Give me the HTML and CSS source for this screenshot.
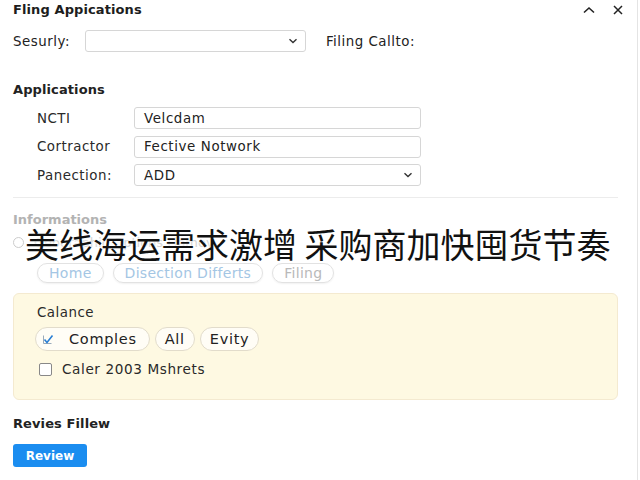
FILE: index.html
```html
<!DOCTYPE html>
<html>
<head>
<meta charset="utf-8">
<link rel="stylesheet" href="styles.css">
</head>
<body>
<div class="panel">
  <div class="header">
    <div class="title">Fling Appications</div>
    <div class="hicons">
      <svg width="14" height="10" viewBox="0 0 14 10"><path d="M2 7.5 L7 3 L12 7.5" fill="none" stroke="#222" stroke-width="1.6"/></svg>
      <svg width="12" height="12" viewBox="0 0 12 12"><path d="M2 2 L10 10 M10 2 L2 10" fill="none" stroke="#222" stroke-width="1.5"/></svg>
    </div>
  </div>

  <div class="toprow">
    <span class="lbl">Sesurly:</span>
    <div class="select sel1"><span></span><svg class="chev" width="10" height="6" viewBox="0 0 10 6"><path d="M1.5 1.2 L5 4.5 L8.5 1.2" fill="none" stroke="#333" stroke-width="1.4"/></svg></div>
    <span class="lbl callto">Filing Callto:</span>
  </div>

  <div class="section">Applications</div>
  <div class="form">
    <span class="flabel">NCTI</span><div class="input">Velcdam</div>
    <span class="flabel">Cortractor</span><div class="input">Fective Notwork</div>
    <span class="flabel">Panection:</span><div class="input select"><span>ADD</span><svg class="chev" width="10" height="6" viewBox="0 0 10 6"><path d="M1.5 1.2 L5 4.5 L8.5 1.2" fill="none" stroke="#333" stroke-width="1.4"/></svg></div>
  </div>
  <div class="divider"></div>

  <div class="info">Informations</div>
  <div class="radiorow">
    <span class="radio"></span><span class="faded">Geographic Options Fiamoy</span>
    <div class="caption">美线海运需求激增 采购商加快囤货节奏</div>
  </div>
  <div class="tabs">
    <span class="tab blue">Home</span>
    <span class="tab blue">Disection Differts</span>
    <span class="tab grey">Filing</span>
  </div>

  <div class="notice">
    <div class="ntitle">Calance</div>
    <div class="chips">
      <span class="chip"><svg width="12" height="11" viewBox="0 0 12 11"><path d="M1.5 1.5 V9.5 H9.5" fill="none" stroke="#9ab" stroke-width="1"/><path d="M2.5 5.5 L5 8.5 L10.5 1.5" fill="none" stroke="#2a7fd4" stroke-width="1.6"/></svg>Comples</span>
      <span class="chip">All</span>
      <span class="chip">Evity</span>
    </div>
    <label class="check"><span class="box"></span>Caler 2003 Mshrets</label>
  </div>

  <div class="section rev">Revies Fillew</div>
  <button class="btn">Review</button>
</div>
</body>
</html>
```

FILE: styles.css
```css
* { box-sizing: border-box; }
html, body { margin: 0; padding: 0; background: #fff; }
body {
  font-family: "DejaVu Sans", "Noto Sans CJK SC", sans-serif;
  font-size: 13px;
  color: #222;
  width: 640px;
  height: 480px;
  overflow: hidden;
}
.panel {
  width: 638px;
  height: 480px;
  border-right: 1px solid #e4e4e4;
  padding: 0 19px 0 13px;
  position: relative;
}
.header {
  display: flex;
  justify-content: space-between;
  align-items: center;
  height: 19px;
}
.title { font-weight: bold; font-size: 13px; letter-spacing: 0.1px; color: #1d1d1d; }
.hicons { display: flex; gap: 16px; align-items: center; margin-right: -6px; }

.toprow {
  display: flex;
  align-items: center;
  margin-top: 11px;
  height: 22px;
}
.lbl { font-size: 13.4px; letter-spacing: 0.5px; color: #222; }
.select {
  display: flex;
  align-items: center;
  justify-content: space-between;
}
.sel1 {
  margin-left: 15px;
  width: 221px;
  height: 22px;
  border: 1px solid #d6d6d6;
  border-radius: 3px;
  padding: 0 7px 0 9px;
}
.callto { margin-left: 20px; }

.section {
  font-weight: bold;
  font-size: 13px;
  letter-spacing: 0.1px;
  margin-top: 30px;
  height: 16px;
  line-height: 16px;
}
.form {
  display: grid;
  grid-template-columns: 97px 287px;
  row-gap: 6.5px;
  margin-top: 9px;
  padding-left: 24px;
  align-items: center;
}
.flabel { font-size: 13.4px; letter-spacing: 0.5px; color: #2a2a2a; }
.input {
  height: 22px;
  border: 1px solid #d6d6d6;
  border-radius: 3px;
  padding: 0 9px;
  display: flex;
  align-items: center;
  font-size: 13.4px;
  letter-spacing: 0.6px;
  color: #222;
}
.input .chev { margin-right: -2px; }
.divider {
  height: 1px;
  background: #ececec;
  margin-top: 11px;
}
.info {
  color: #b3b3b3;
  font-weight: bold;
  font-size: 13px;
  margin-top: 14px;
  height: 16px;
  line-height: 16px;
}
.radiorow {
  position: relative;
  height: 22px;
  margin-top: 3px;
  display: flex;
  align-items: center;
}
.radio {
  width: 11px;
  height: 11px;
  border: 1px solid #ccc;
  border-radius: 50%;
}
.faded { color: #d4d4d4; margin-left: 10px; font-size: 13px; }
.caption {
  position: absolute;
  left: 12px;
  top: -5px;
  font-family: "Noto Sans CJK SC", sans-serif;
  font-size: 34px;
  line-height: 36px;
  color: #111;
  white-space: nowrap;
  text-shadow: 0 0 3px #fff, 0 0 2px #fff;
}
.tabs {
  display: flex;
  gap: 9px;
  margin-top: 10px;
  padding-left: 24px;
}
.tab {
  height: 20px;
  border: 1px solid #e2e2e2;
  border-radius: 10px;
  padding: 0 11px;
  display: flex;
  align-items: center;
  font-size: 14px;
  letter-spacing: 0.3px;
  box-shadow: 0 1px 2px rgba(0,0,0,0.06);
}
.tab.blue { color: #a4c6e4; }
.tab.grey { color: #b9b9b9; }

.notice {
  margin-top: 10px;
  background: #fef9e2;
  border: 1px solid #f4ead0;
  border-radius: 6px;
  height: 107px;
  padding: 11px 0 0 23px;
}
.ntitle { font-size: 13.4px; letter-spacing: 0.5px; color: #2a2a2a; height: 15px; line-height: 15px; }
.chips {
  display: flex;
  gap: 5px;
  margin-top: 7px;
  margin-left: -2px;
}
.chip {
  height: 24px;
  border: 1px solid #e2dccb;
  border-radius: 12px;
  background: #fffdf6;
  padding: 0 9px;
  display: flex;
  align-items: center;
  gap: 15px;
  font-size: 14.5px;
  letter-spacing: 0.7px;
  color: #222;
}
.chip:first-child { padding-left: 6px; padding-right: 12px; }
.check {
  display: flex;
  align-items: center;
  gap: 10px;
  margin-top: 10px;
  font-size: 13.6px;
  letter-spacing: 0.6px;
  color: #2a2a2a;
  margin-left: 2px;
}
.box {
  width: 13px;
  height: 13px;
  border: 1px solid #888;
  border-radius: 2px;
  background: #fff;
}
.section.rev { margin-top: 16px; }
.btn {
  margin-top: 12px;
  width: 74px;
  height: 23px;
  border: none;
  border-radius: 3px;
  background: #1b8df0;
  color: #fff;
  font-family: "DejaVu Sans", sans-serif;
  font-weight: bold;
  font-size: 12px;
  padding: 0;
}
```
